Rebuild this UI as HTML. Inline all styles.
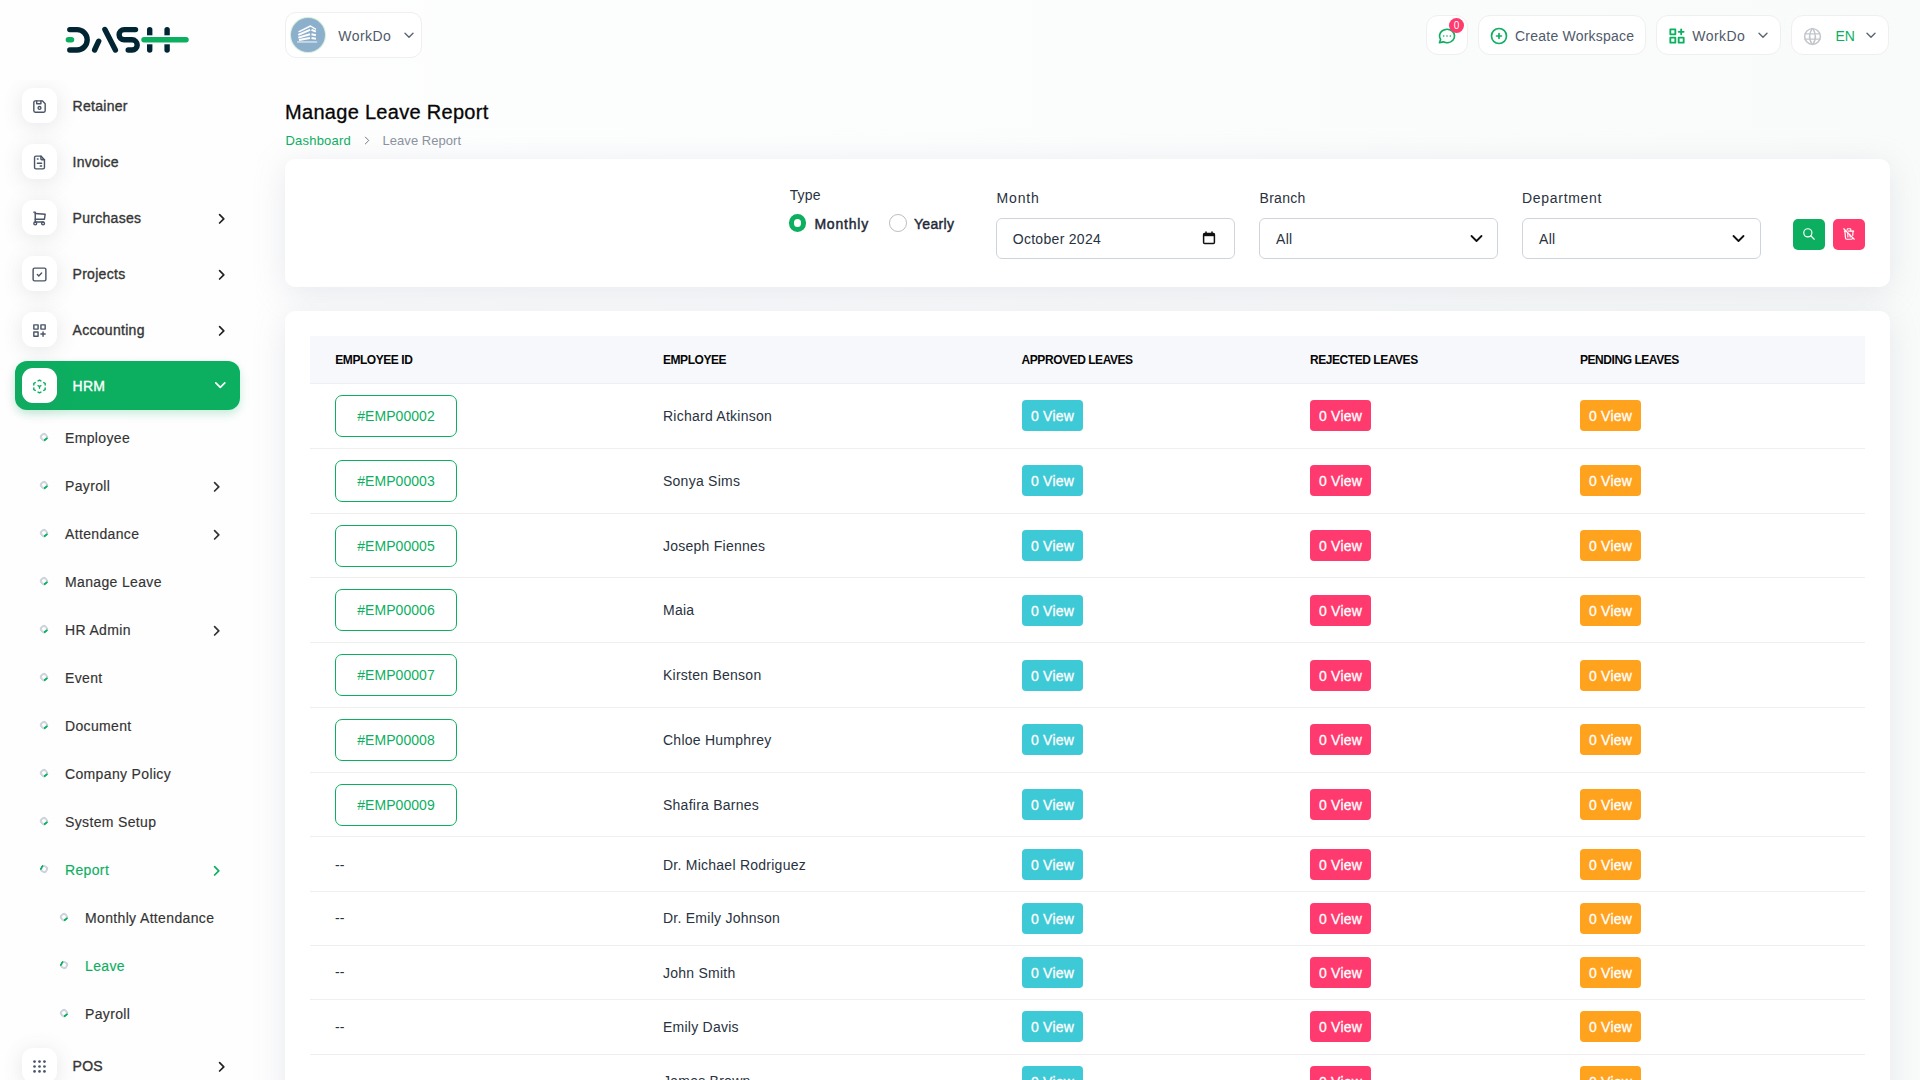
<!DOCTYPE html>
<html>
<head>
<meta charset="utf-8">
<style>
*{box-sizing:border-box;margin:0;padding:0}
html,body{width:1920px;height:1080px;overflow:hidden}
body{position:relative;font-family:"Liberation Sans",sans-serif;color:#293240;background:linear-gradient(90deg,#fefefe 0%,#fcfdfd 40%,#f9fbfa 100%)}
.a{position:absolute;white-space:nowrap;line-height:1}
svg{display:block;overflow:visible}
.ic{position:absolute;fill:none;stroke-linecap:round;stroke-linejoin:round}
/* sidebar */
.nav{position:absolute;left:0;top:80px;width:270px;height:1000px;overflow:hidden}
.ibox{position:absolute;left:22px;width:35px;height:35px;border-radius:11px;background:#fff;box-shadow:0 3px 20px rgba(90,95,105,.15)}
.ibox svg{position:absolute;left:9.5px;top:9.5px}
.mt{position:absolute;left:72.5px;font-size:14px;font-weight:400;-webkit-text-stroke:.35px currentColor;letter-spacing:.3px;color:#363636;line-height:1;white-space:nowrap}
.st{position:absolute;left:65px;font-size:14px;color:#333;letter-spacing:.35px;-webkit-text-stroke:.15px currentColor;line-height:1;white-space:nowrap}
.dot{position:absolute;width:8.2px;height:8.2px;border-radius:50%;border:2px solid #cdd3dc;border-bottom-color:#0CAF60;transform:rotate(-40deg)}
.dot.on{border-color:#cdd3dc;border-left-color:#0CAF60;transform:rotate(30deg)}
/* header */
.hb{position:absolute;background:#fff;border:1px solid #efefef;border-radius:12px}
/* cards */
.card{position:absolute;left:285px;width:1605px;background:#fff;border-radius:10px;box-shadow:0 6px 30px rgba(182,186,203,.3)}
.lbl{position:absolute;font-size:14px;color:#293240;line-height:1;white-space:nowrap}
.inp{position:absolute;top:218px;width:239px;height:41px;border:1px solid #cfd4db;border-radius:6px;background:#fff}
.btn{position:absolute;top:219px;width:32px;height:31px;border-radius:5px}
/* table */
.th{position:absolute;top:353.7px;font-size:12px;font-weight:700;color:#060606;letter-spacing:-.45px;line-height:1;white-space:nowrap}
.rl{position:absolute;left:310px;width:1555px;height:1px;background:#efefef}
.emp{position:absolute;left:335px;width:122px;height:42px;border:1px solid #0CAF60;border-radius:7px;color:#0CAF60;font-size:14px;line-height:40px;text-align:center;letter-spacing:.05px}
.nm{position:absolute;left:663px;font-size:14px;color:#293240;line-height:1;white-space:nowrap;letter-spacing:.25px}
.vb{position:absolute;width:61px;height:31px;border-radius:4px;color:#fff;font-size:14px;line-height:32px;text-align:center;letter-spacing:.2px;-webkit-text-stroke:.3px #fff}
.c1{left:1022px;background:#3ec9d6}
.c2{left:1310px;background:#ff3a6e}
.c3{left:1580px;background:#ffa21d}
.dash{position:absolute;left:335px;font-size:14px;color:#293240;line-height:1}
</style>
</head>
<body>
<!-- LOGO -->
<svg class="ic" style="left:0;top:0" width="200" height="70" viewBox="0 0 200 70">
  <g stroke="#022534" stroke-width="5.4" stroke-linecap="round" fill="none">
    <path d="M69.8 29.6H77A10.2 10.2 0 0 1 77 50H69.8"/>
    <path d="M94.6 50L98.7 41.2"/>
    <path d="M104.9 29.5L115.4 50"/>
    <path d="M135.5 29.6H124.2A5.1 5.1 0 0 0 124.2 39.8H132.1A5.1 5.1 0 0 1 132.1 50H128.2"/>
    <path d="M149.7 29.6V50"/>
    <path d="M167.1 29.6V50"/>
  </g>
  <path d="M145 39.8H172" stroke="#fff" stroke-width="9" stroke-linecap="butt"/>
  <g stroke="#0CAF60" stroke-width="5.5" stroke-linecap="round">
    <path d="M68.4 39.8H71.5"/>
    <path d="M144 39.8H186"/>
  </g>
</svg>

<!-- SIDEBAR -->
<div class="nav">
<div class="ibox" style="top:8px"><svg class="ic" style="left:9px;top:10.2px" width="17" height="17" viewBox="0 0 24 24" stroke="#4a5568" stroke-width="2"><path d="M6 4h10l4 4v10a2 2 0 0 1 -2 2h-12a2 2 0 0 1 -2 -2v-12a2 2 0 0 1 2 -2"/><circle cx="12" cy="14" r="2"/><path d="M14 4v4h-6v-4"/></svg></div>
<div class="mt" style="top:19.15px">Retainer</div>
<div class="ibox" style="top:64px"><svg class="ic" style="left:9px;top:10.2px" width="17" height="17" viewBox="0 0 24 24" stroke="#4a5568" stroke-width="2"><path d="M14 3v4a1 1 0 0 0 1 1h4"/><path d="M17 21h-10a2 2 0 0 1 -2 -2v-14a2 2 0 0 1 2 -2h7l5 5v11a2 2 0 0 1 -2 2z"/><path d="M9 7h1"/><path d="M9 13h6"/><path d="M13 17h2"/></svg></div>
<div class="mt" style="top:75.15px">Invoice</div>
<div class="ibox" style="top:120px"><svg class="ic" style="left:9px;top:10.2px" width="17" height="17" viewBox="0 0 24 24" stroke="#4a5568" stroke-width="2"><circle cx="6" cy="19" r="2"/><circle cx="17" cy="19" r="2"/><path d="M17 17h-11v-14h-2"/><path d="M6 5l14 1l-1 7h-13"/></svg></div>
<div class="mt" style="top:131.15px">Purchases</div>
<svg class="ic" style="left:219.4px;top:134.40px" width="6" height="10" viewBox="0 0 6 10"><path d="M0.6 0.6L4.8 4.8L0.6 9" stroke="#222" stroke-width="1.7"/></svg>
<div class="ibox" style="top:176px"><svg class="ic" style="left:9px;top:10.2px" width="17" height="17" viewBox="0 0 24 24" stroke="#4a5568" stroke-width="2"><rect x="3" y="3" width="18" height="18" rx="2"/><path d="M9 12l2 2l4 -4"/></svg></div>
<div class="mt" style="top:187.15px">Projects</div>
<svg class="ic" style="left:219.4px;top:190.40px" width="6" height="10" viewBox="0 0 6 10"><path d="M0.6 0.6L4.8 4.8L0.6 9" stroke="#222" stroke-width="1.7"/></svg>
<div class="ibox" style="top:232px"><svg class="ic" style="left:9px;top:10.2px" width="17" height="17" viewBox="0 0 24 24" stroke="#4a5568" stroke-width="2"><path d="M4 4h6v6h-6z"/><path d="M14 4h6v6h-6z"/><path d="M4 14h6v6h-6z"/><path d="M14 17h6m-3 -3v6"/></svg></div>
<div class="mt" style="top:243.15px">Accounting</div>
<svg class="ic" style="left:219.4px;top:246.40px" width="6" height="10" viewBox="0 0 6 10"><path d="M0.6 0.6L4.8 4.8L0.6 9" stroke="#222" stroke-width="1.7"/></svg>
<div style="position:absolute;left:15px;top:281px;width:225px;height:49px;border-radius:12px;background:#0CAF60;box-shadow:0 4px 8px rgba(12,175,96,.22)"></div>
<div class="ibox" style="top:288px"><svg class="ic" style="left:9px;top:10.2px" width="17" height="17" viewBox="0 0 24 24" stroke="#0CAF60" stroke-width="2"><path d="M6 17.6l-2 -1.1v-2.5"/><path d="M4 10v-2.5l2 -1.1"/><path d="M10 4.1l2 -1.1l2 1.1"/><path d="M18 6.4l2 1.1v2.5"/><path d="M20 14v2.5l-2 1.12"/><path d="M14 19.9l-2 1.1l-2 -1.1"/><path d="M12 12l2 -1.1"/><path d="M12 12v2.5"/><path d="M12 12l-2 -1.12"/></svg></div>
<div class="mt" style="top:299.15px;color:#fff">HRM</div>
<svg class="ic" style="left:215px;top:301.7px" width="11" height="7" viewBox="0 0 11 7"><path d="M0.8 0.8L5.3 5.3L9.8 0.8" stroke="#fff" stroke-width="1.7"/></svg>
<div class="dot" style="left:40px;top:353.00px"></div>
<div class="st" style="left:65px;top:350.95px;color:#333">Employee</div>
<div class="dot" style="left:40px;top:401.00px"></div>
<div class="st" style="left:65px;top:398.95px;color:#333">Payroll</div>
<svg class="ic" style="left:213.9px;top:402.40px" width="6" height="10" viewBox="0 0 6 10"><path d="M0.6 0.6L4.8 4.8L0.6 9" stroke="#333" stroke-width="1.7"/></svg>
<div class="dot" style="left:40px;top:449.00px"></div>
<div class="st" style="left:65px;top:446.95px;color:#333">Attendance</div>
<svg class="ic" style="left:213.9px;top:450.40px" width="6" height="10" viewBox="0 0 6 10"><path d="M0.6 0.6L4.8 4.8L0.6 9" stroke="#333" stroke-width="1.7"/></svg>
<div class="dot" style="left:40px;top:497.00px"></div>
<div class="st" style="left:65px;top:494.95px;color:#333">Manage Leave</div>
<div class="dot" style="left:40px;top:545.00px"></div>
<div class="st" style="left:65px;top:542.95px;color:#333">HR Admin</div>
<svg class="ic" style="left:213.9px;top:546.40px" width="6" height="10" viewBox="0 0 6 10"><path d="M0.6 0.6L4.8 4.8L0.6 9" stroke="#333" stroke-width="1.7"/></svg>
<div class="dot" style="left:40px;top:593.00px"></div>
<div class="st" style="left:65px;top:590.95px;color:#333">Event</div>
<div class="dot" style="left:40px;top:641.00px"></div>
<div class="st" style="left:65px;top:638.95px;color:#333">Document</div>
<div class="dot" style="left:40px;top:689.00px"></div>
<div class="st" style="left:65px;top:686.95px;color:#333">Company Policy</div>
<div class="dot" style="left:40px;top:737.00px"></div>
<div class="st" style="left:65px;top:734.95px;color:#333">System Setup</div>
<div class="dot on" style="left:40px;top:785.00px"></div>
<div class="st" style="left:65px;top:782.95px;color:#0CAF60">Report</div>
<svg class="ic" style="left:213.9px;top:786.40px" width="6" height="10" viewBox="0 0 6 10"><path d="M0.6 0.6L4.8 4.8L0.6 9" stroke="#0CAF60" stroke-width="1.7"/></svg>
<div class="dot" style="left:60px;top:833.00px"></div>
<div class="st" style="left:85px;top:830.95px;color:#333">Monthly Attendance</div>
<div class="dot on" style="left:60px;top:881.00px"></div>
<div class="st" style="left:85px;top:878.95px;color:#0CAF60">Leave</div>
<div class="dot" style="left:60px;top:929.00px"></div>
<div class="st" style="left:85px;top:926.95px;color:#333">Payroll</div>
<div class="ibox" style="top:968px"><svg class="ic" style="left:9px;top:10.2px" width="17" height="17" viewBox="0 0 24 24"><circle cx="5" cy="5" r="1.9" fill="#4a5568" stroke="none"/><circle cx="5" cy="12" r="1.9" fill="#4a5568" stroke="none"/><circle cx="5" cy="19" r="1.9" fill="#4a5568" stroke="none"/><circle cx="12" cy="5" r="1.9" fill="#4a5568" stroke="none"/><circle cx="12" cy="12" r="1.9" fill="#4a5568" stroke="none"/><circle cx="12" cy="19" r="1.9" fill="#4a5568" stroke="none"/><circle cx="19" cy="5" r="1.9" fill="#4a5568" stroke="none"/><circle cx="19" cy="12" r="1.9" fill="#4a5568" stroke="none"/><circle cx="19" cy="19" r="1.9" fill="#4a5568" stroke="none"/></svg></div>
<div class="mt" style="top:979.15px">POS</div>
<svg class="ic" style="left:219.4px;top:982.40px" width="6" height="10" viewBox="0 0 6 10"><path d="M0.6 0.6L4.8 4.8L0.6 9" stroke="#222" stroke-width="1.7"/></svg>
</div>

<!-- HEADER -->
<div class="hb" style="left:285px;top:12px;width:137px;height:46px;border-radius:11px"></div>
<div style="position:absolute;left:291px;top:18px;width:34px;height:34px;border-radius:50%;background:#8cafcb;box-shadow:0 0 0 1px #d3efdc"></div>
<svg class="ic" style="left:296px;top:23px" width="24" height="24" viewBox="0 0 24 24">
  <g stroke="#fff" stroke-linecap="butt" fill="none">
    <path d="M2.6 8.8L14.5 3L19.9 6.3" stroke-width="1.4"/>
    <path d="M2.3 11.8L14 6.8M2.3 14.6L14 11.3M3 17L14 15.1" stroke-width="2"/>
    <path d="M15.5 6.8L19.9 8.7M15.5 11.3L19.9 12.2M15.5 15.1L19.9 15.8" stroke-width="2"/>
  </g>
  <rect x="1.1" y="18" width="20.1" height="1.9" fill="#c4d6e4"/>
</svg>
<div class="a" style="left:338.3px;top:29.15px;font-size:14px;color:#4f5a6b;letter-spacing:.45px">WorkDo</div>
<svg class="ic" style="left:404px;top:32px" width="10" height="7" viewBox="0 0 10 7"><path d="M1 1.2L5 5.2L9 1.2" stroke="#5a6472" stroke-width="1.4"/></svg>

<div class="hb" style="left:1425.6px;top:14.8px;width:42.4px;height:40.2px"></div>
<svg class="ic" style="left:1437px;top:25.5px" width="20" height="20" viewBox="0 0 24 24" stroke="#0CAF60" stroke-width="2"><path d="M3 20l1.3 -3.9c-2.324 -3.437 -1.426 -7.872 2.1 -10.374c3.526 -2.501 8.59 -2.296 11.845 .48c3.255 2.777 3.695 7.266 1.029 10.501c-2.666 3.235 -7.615 4.215 -11.574 2.293l-4.7 1"/><path d="M8 12v.01"/><path d="M12 12v.01"/><path d="M16 12v.01"/></svg>
<div style="position:absolute;left:1449px;top:17.9px;width:15px;height:15px;border-radius:50%;background:#ff3a6e;color:#fff;font-size:10px;line-height:15px;text-align:center">0</div>

<div class="hb" style="left:1477.5px;top:14.8px;width:168.5px;height:40.2px"></div>
<svg class="ic" style="left:1489.3px;top:26.2px" width="20" height="20" viewBox="0 0 24 24" stroke="#0CAF60" stroke-width="2"><circle cx="12" cy="12" r="9"/><path d="M9 12h6"/><path d="M12 9v6"/></svg>
<div class="a" style="left:1515px;top:29.05px;font-size:14px;color:#4f5a6b;letter-spacing:.23px">Create Workspace</div>

<div class="hb" style="left:1655.9px;top:14.8px;width:125px;height:40.2px"></div>
<svg class="ic" style="left:1667.2px;top:26.1px" width="20" height="20" viewBox="0 0 24 24" stroke="#0CAF60" stroke-width="2.2"><path d="M4 4h6v6h-6z"/><path d="M14 4h6v6h-6z" stroke="none"/><path d="M4 14h6v6h-6z"/><path d="M14 14h6v6h-6z"/><path d="M14 7h6m-3 -3v6"/></svg>
<div class="a" style="left:1692.3px;top:29.05px;font-size:14px;color:#4f5a6b;letter-spacing:.45px">WorkDo</div>
<svg class="ic" style="left:1758px;top:32px" width="10" height="7" viewBox="0 0 10 7"><path d="M1 1.2L5 5.2L9 1.2" stroke="#5a6472" stroke-width="1.4"/></svg>

<div class="hb" style="left:1790.6px;top:14.8px;width:98.4px;height:40.2px"></div>
<svg class="ic" style="left:1801.6px;top:25.5px" width="21" height="21" viewBox="0 0 24 24" stroke="#c2c5ca" stroke-width="1.7"><path d="M3 12a9 9 0 1 0 18 0a9 9 0 0 0 -18 0"/><path d="M3.6 9h16.8"/><path d="M3.6 15h16.8"/><path d="M11.5 3a17 17 0 0 0 0 18"/><path d="M12.5 3a17 17 0 0 1 0 18"/></svg>
<div class="a" style="left:1835.5px;top:29.05px;font-size:14px;color:#0CAF60;letter-spacing:0">EN</div>
<svg class="ic" style="left:1865.8px;top:32px" width="10" height="7" viewBox="0 0 10 7"><path d="M1 1.2L5 5.2L9 1.2" stroke="#5a6472" stroke-width="1.4"/></svg>

<!-- TITLE -->
<div class="a" style="left:285px;top:102px;font-size:20px;color:#060606;letter-spacing:.3px;-webkit-text-stroke:.3px #060606">Manage Leave Report</div>
<div class="a" style="left:285.5px;top:134px;font-size:13px;color:#0CAF60;letter-spacing:.2px">Dashboard</div>
<svg class="ic" style="left:362px;top:136px" width="9" height="9" viewBox="0 0 24 24"><path d="M9 3l9 9l-9 9" stroke="#6c757d" stroke-width="2.6"/></svg>
<div class="a" style="left:382.5px;top:134px;font-size:13px;color:#8a929d;letter-spacing:.05px">Leave Report</div>

<!-- FILTER CARD -->
<div class="card" style="top:159px;height:128px"></div>
<div class="lbl" style="left:789.7px;top:188.35px;letter-spacing:.15px">Type</div>
<div style="position:absolute;left:788.9px;top:214px;width:17.5px;height:17.5px;border-radius:50%;border:5px solid #0CAF60;background:#fff"></div>
<div class="lbl" style="left:814.4px;top:217.05px;-webkit-text-stroke:.45px currentColor;color:#1f2937;letter-spacing:.8px">Monthly</div>
<div style="position:absolute;left:889px;top:214px;width:17.8px;height:17.8px;border-radius:50%;border:1px solid #b9bdc3;background:#fff"></div>
<div class="lbl" style="left:914px;top:217.05px;-webkit-text-stroke:.45px currentColor;color:#1f2937;letter-spacing:.3px">Yearly</div>

<div class="lbl" style="left:996.4px;top:191.25px;letter-spacing:.9px">Month</div>
<div class="inp" style="left:996.4px"></div>
<div class="lbl" style="left:1012.7px;top:232.05px;letter-spacing:.3px">October 2024</div>
<svg class="ic" style="left:1202px;top:230.5px" width="14" height="14" viewBox="0 0 14 14"><rect x="1.6" y="2.6" width="10.8" height="9.8" rx="1" stroke="#111" stroke-width="1.5"/><rect x="1.6" y="2.6" width="10.8" height="2.6" fill="#111"/><path d="M4 1v2M10 1v2" stroke="#111" stroke-width="1.5"/></svg>

<div class="lbl" style="left:1259.5px;top:191.25px;letter-spacing:.3px">Branch</div>
<div class="inp" style="left:1259.2px"></div>
<div class="lbl" style="left:1276px;top:232.15px;letter-spacing:.3px">All</div>
<svg class="ic" style="left:1469.5px;top:234.3px" width="13" height="9" viewBox="0 0 13 9"><path d="M1.5 2L6.5 7L11.5 2" stroke="#111" stroke-width="1.8"/></svg>

<div class="lbl" style="left:1522px;top:191.25px;letter-spacing:.7px">Department</div>
<div class="inp" style="left:1522px"></div>
<div class="lbl" style="left:1539px;top:232.15px;letter-spacing:.3px">All</div>
<svg class="ic" style="left:1732.3px;top:234.3px" width="13" height="9" viewBox="0 0 13 9"><path d="M1.5 2L6.5 7L11.5 2" stroke="#111" stroke-width="1.8"/></svg>

<div class="btn" style="left:1793px;background:#0CAF60"></div>
<svg class="ic" style="left:1801.8px;top:227.3px" width="14" height="14" viewBox="0 0 24 24" stroke="#fff" stroke-width="2"><circle cx="10" cy="10" r="7"/><path d="M21 21l-6 -6"/></svg>
<div class="btn" style="left:1833px;background:#ff3a6e"></div>
<svg class="ic" style="left:1841.5px;top:227.3px" width="14" height="14" viewBox="0 0 24 24" stroke="#fff" stroke-width="2"><path d="M3 3l18 18"/><path d="M4 7h3m4 0h9"/><path d="M10 11v6"/><path d="M14 14v3"/><path d="M5 7l1 12a2 2 0 0 0 2 2h8a2 2 0 0 0 2 -2l.077 -.923"/><path d="M18.384 14.373l.616 -7.373"/><path d="M9 5v-1a1 1 0 0 1 1 -1h4a1 1 0 0 1 1 1v3"/></svg>

<!-- TABLE CARD -->
<div class="card" style="top:311px;height:900px"></div>
<div style="position:absolute;left:310px;top:336px;width:1555px;height:47.5px;background:#f7f8fc"></div>
<div class="th" style="left:335.3px">EMPLOYEE ID</div>
<div class="th" style="left:663px">EMPLOYEE</div>
<div class="th" style="left:1021.6px">APPROVED LEAVES</div>
<div class="th" style="left:1310px">REJECTED LEAVES</div>
<div class="th" style="left:1580px">PENDING LEAVES</div>
<div class="rl" style="top:383px"></div>
<div class="emp" style="top:394.90px">#EMP00002</div>
<div class="nm" style="top:408.95px">Richard Atkinson</div>
<div class="vb c1" style="top:400.40px">0 View</div>
<div class="vb c2" style="top:400.40px">0 View</div>
<div class="vb c3" style="top:400.40px">0 View</div>
<div class="rl" style="top:448px"></div>
<div class="emp" style="top:459.70px">#EMP00003</div>
<div class="nm" style="top:473.75px">Sonya Sims</div>
<div class="vb c1" style="top:465.20px">0 View</div>
<div class="vb c2" style="top:465.20px">0 View</div>
<div class="vb c3" style="top:465.20px">0 View</div>
<div class="rl" style="top:513px"></div>
<div class="emp" style="top:524.50px">#EMP00005</div>
<div class="nm" style="top:538.55px">Joseph Fiennes</div>
<div class="vb c1" style="top:530.00px">0 View</div>
<div class="vb c2" style="top:530.00px">0 View</div>
<div class="vb c3" style="top:530.00px">0 View</div>
<div class="rl" style="top:577px"></div>
<div class="emp" style="top:589.30px">#EMP00006</div>
<div class="nm" style="top:603.35px">Maia</div>
<div class="vb c1" style="top:594.80px">0 View</div>
<div class="vb c2" style="top:594.80px">0 View</div>
<div class="vb c3" style="top:594.80px">0 View</div>
<div class="rl" style="top:642px"></div>
<div class="emp" style="top:654.10px">#EMP00007</div>
<div class="nm" style="top:668.15px">Kirsten Benson</div>
<div class="vb c1" style="top:659.60px">0 View</div>
<div class="vb c2" style="top:659.60px">0 View</div>
<div class="vb c3" style="top:659.60px">0 View</div>
<div class="rl" style="top:707px"></div>
<div class="emp" style="top:718.90px">#EMP00008</div>
<div class="nm" style="top:732.95px">Chloe Humphrey</div>
<div class="vb c1" style="top:724.40px">0 View</div>
<div class="vb c2" style="top:724.40px">0 View</div>
<div class="vb c3" style="top:724.40px">0 View</div>
<div class="rl" style="top:772px"></div>
<div class="emp" style="top:783.70px">#EMP00009</div>
<div class="nm" style="top:797.75px">Shafira Barnes</div>
<div class="vb c1" style="top:789.20px">0 View</div>
<div class="vb c2" style="top:789.20px">0 View</div>
<div class="vb c3" style="top:789.20px">0 View</div>
<div class="rl" style="top:836px"></div>
<div class="dash" style="top:857.70px">--</div>
<div class="nm" style="top:857.95px">Dr. Michael Rodriguez</div>
<div class="vb c1" style="top:849.40px">0 View</div>
<div class="vb c2" style="top:849.40px">0 View</div>
<div class="vb c3" style="top:849.40px">0 View</div>
<div class="rl" style="top:891px"></div>
<div class="dash" style="top:911.20px">--</div>
<div class="nm" style="top:911.45px">Dr. Emily Johnson</div>
<div class="vb c1" style="top:902.90px">0 View</div>
<div class="vb c2" style="top:902.90px">0 View</div>
<div class="vb c3" style="top:902.90px">0 View</div>
<div class="rl" style="top:945px"></div>
<div class="dash" style="top:965.40px">--</div>
<div class="nm" style="top:965.65px">John Smith</div>
<div class="vb c1" style="top:957.10px">0 View</div>
<div class="vb c2" style="top:957.10px">0 View</div>
<div class="vb c3" style="top:957.10px">0 View</div>
<div class="rl" style="top:999px"></div>
<div class="dash" style="top:1019.60px">--</div>
<div class="nm" style="top:1019.85px">Emily Davis</div>
<div class="vb c1" style="top:1011.30px">0 View</div>
<div class="vb c2" style="top:1011.30px">0 View</div>
<div class="vb c3" style="top:1011.30px">0 View</div>
<div class="rl" style="top:1054px"></div>
<div class="dash" style="top:1073.80px">--</div>
<div class="nm" style="top:1074.05px">James Brown</div>
<div class="vb c1" style="top:1065.50px">0 View</div>
<div class="vb c2" style="top:1065.50px">0 View</div>
<div class="vb c3" style="top:1065.50px">0 View</div>
<div class="rl" style="top:1108px"></div>

</body>
</html>
